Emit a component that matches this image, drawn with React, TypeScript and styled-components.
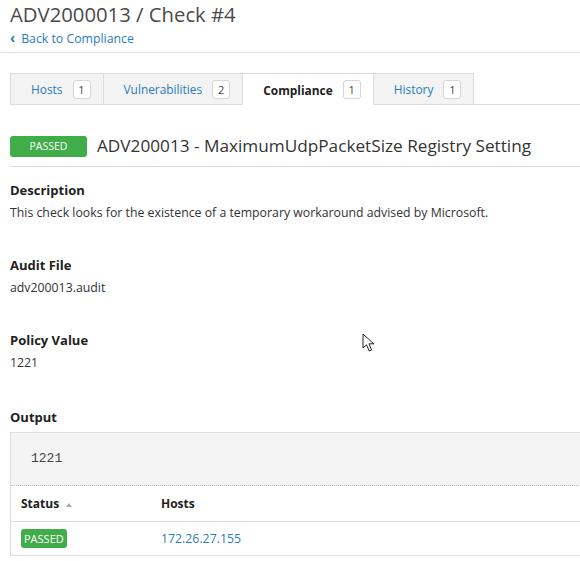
import styled, { createGlobalStyle } from 'styled-components'

const GlobalStyle = createGlobalStyle`
  html, body {
    margin: 0;
    padding: 0;
    background: #fff;
  }
  body {
    font-family: 'Open Sans', 'Noto Sans', sans-serif;
    color: #333;
    overflow: hidden;
  }
`

interface Tab {
  label: string
  count: number
  active?: boolean
}

const tabs: Tab[] = [
  { label: 'Hosts', count: 1 },
  { label: 'Vulnerabilities', count: 2 },
  { label: 'Compliance', count: 1, active: true },
  { label: 'History', count: 1 },
]

const sections = [
  {
    title: 'Description',
    text: 'This check looks for the existence of a temporary workaround advised by Microsoft.',
  },
  { title: 'Audit File', text: 'adv200013.audit' },
  { title: 'Policy Value', text: '1221' },
]

function App() {
  return (
    <Page>
      <GlobalStyle />
      <PageHeader>
        <PageTitle>ADV2000013 / Check #4</PageTitle>
        <BackLink href="#">
          <Chevron>‹</Chevron>Back to Compliance
        </BackLink>
      </PageHeader>
      <Content>
        <TabBar>
          {tabs.map((tab) => (
            <TabItem key={tab.label} $active={tab.active}>
              {tab.label}
              <Count>{tab.count}</Count>
            </TabItem>
          ))}
        </TabBar>

        <CheckHeader>
          <StatusLabel>PASSED</StatusLabel>
          <CheckTitle>ADV200013 - MaximumUdpPacketSize Registry Setting</CheckTitle>
        </CheckHeader>

        {sections.map((s) => (
          <Section key={s.title}>
            <SectionTitle>{s.title}</SectionTitle>
            <SectionText>{s.text}</SectionText>
          </Section>
        ))}

        <OutputTitle>Output</OutputTitle>
        <OutputPanel>
          <OutputText>1221</OutputText>
          <HostTable>
            <thead>
              <tr>
                <HeadCell $width={120}>
                  Status <SortArrow />
                </HeadCell>
                <HeadCell>Hosts</HeadCell>
              </tr>
            </thead>
            <tbody>
              <tr>
                <BodyCell>
                  <SmallStatus>PASSED</SmallStatus>
                </BodyCell>
                <BodyCell>
                  <HostLink href="#">172.26.27.155</HostLink>
                </BodyCell>
              </tr>
            </tbody>
          </HostTable>
        </OutputPanel>
      </Content>

      <Cursor width="14" height="20" viewBox="0 0 14 20">
        <path
          d="M1 1 L1 15 L4.5 11.8 L7.2 18 L9.6 17 L7 10.8 L11.8 10.8 Z"
          fill="#fff"
          stroke="#222"
          strokeWidth="1"
          strokeLinejoin="round"
        />
      </Cursor>
    </Page>
  )
}

export default App

const Page = styled.div`
  position: relative;
  width: 580px;
  height: 561px;
  overflow: hidden;
`

const PageHeader = styled.div`
  padding: 0 10px 4px;
  border-bottom: 1px solid #ddd;
`

const PageTitle = styled.h1`
  margin: 0;
  font-size: 20.3px;
  font-weight: 400;
  line-height: 29px;
  color: #4a4a4a;
`

const BackLink = styled.a`
  display: flex;
  align-items: center;
  gap: 6px;
  font-size: 12.3px;
  line-height: 19px;
  color: #2b7bbd;
  text-decoration: none;
`

const Chevron = styled.span`
  font-size: 14px;
  font-weight: 700;
  line-height: 1;
  margin-top: -2px;
`

const Content = styled.div`
  padding: 20px 0 0 10px;
  width: 620px;
`

const TabBar = styled.div`
  display: flex;
  border-bottom: 1px solid #ddd;
  height: 31px;
`

const TabItem = styled.div<{ $active?: boolean }>`
  display: flex;
  align-items: center;
  gap: 10px;
  padding: 0 12px 0 20px;
  font-size: 11.9px;
  border: 1px solid #ddd;
  border-left: none;
  border-bottom: none;
  background: ${(p) => (p.$active ? '#fff' : '#f3f3f3')};
  color: ${(p) => (p.$active ? '#222' : '#2b7bbd')};
  font-weight: ${(p) => (p.$active ? 700 : 400)};
  margin-bottom: ${(p) => (p.$active ? '-1px' : '0')};

  &:first-child {
    border-left: 1px solid #ddd;
  }
`

const Count = styled.span`
  display: inline-flex;
  align-items: center;
  justify-content: center;
  width: 16px;
  height: 17px;
  border: 1px solid #d6d6d6;
  border-radius: 3px;
  background: #fff;
  font-size: 11px;
  font-weight: 400;
  color: #444;
`

const CheckHeader = styled.div`
  display: flex;
  align-items: center;
  gap: 10px;
  height: 24px;
  margin-top: 29px;
  margin-bottom: 12px;
  padding-bottom: 8px;
  border-bottom: 1px solid #ddd;
`

const StatusLabel = styled.span`
  display: inline-flex;
  align-items: center;
  justify-content: center;
  width: 77px;
  height: 21px;
  border-radius: 3px;
  background: #3fae49;
  color: #fff;
  font-size: 10.5px;
`

const CheckTitle = styled.h2`
  margin: 0;
  font-size: 17.2px;
  font-weight: 400;
  line-height: 24px;
  color: #333;
`

const Section = styled.div`
  margin-bottom: 31px;
`

const SectionTitle = styled.div`
  font-size: 13px;
  font-weight: 700;
  line-height: 22px;
  color: #222;
`

const OutputTitle = styled(SectionTitle)`
  margin-top: 33px;
`

const SectionText = styled.div`
  margin-top: 2px;
  font-size: 12.3px;
  line-height: 20px;
  color: #333;
`

const OutputPanel = styled.div`
  margin-top: 4px;
  border: 1px solid #ddd;
  border-bottom: none;
`

const OutputText = styled.pre`
  margin: 0;
  padding: 17px 20px;
  background: #f4f4f4;
  font-family: 'Liberation Mono', 'DejaVu Sans Mono', monospace;
  font-size: 13px;
  line-height: 18px;
  color: #444;
  border-bottom: 1px dotted #bbb;
`

const HostTable = styled.table`
  width: 100%;
  border-collapse: collapse;
`

const HeadCell = styled.th<{ $width?: number }>`
  text-align: left;
  height: 35px;
  padding: 0 10px;
  font-size: 12px;
  font-weight: 700;
  color: #222;
  border-bottom: 1px solid #ddd;
  width: ${(p) => (p.$width ? `${p.$width}px` : 'auto')};
  white-space: nowrap;
`

const SortArrow = styled.span`
  display: inline-block;
  margin-left: 4px;
  vertical-align: middle;
  width: 0;
  height: 0;
  border-left: 3px solid transparent;
  border-right: 3px solid transparent;
  border-bottom: 4px solid #aaa;
`

const BodyCell = styled.td`
  height: 33px;
  padding: 0 10px;
  font-size: 12.3px;
  border-bottom: 1px solid #ddd;
`

const SmallStatus = styled.span`
  display: inline-block;
  padding: 2px 3px;
  border-radius: 3px;
  background: #3fae49;
  color: #fff;
  font-size: 11px;
  line-height: 15px;
`

const HostLink = styled.a`
  color: #2b7bbd;
  text-decoration: none;
`

const Cursor = styled.svg`
  position: absolute;
  left: 362px;
  top: 333px;
`
